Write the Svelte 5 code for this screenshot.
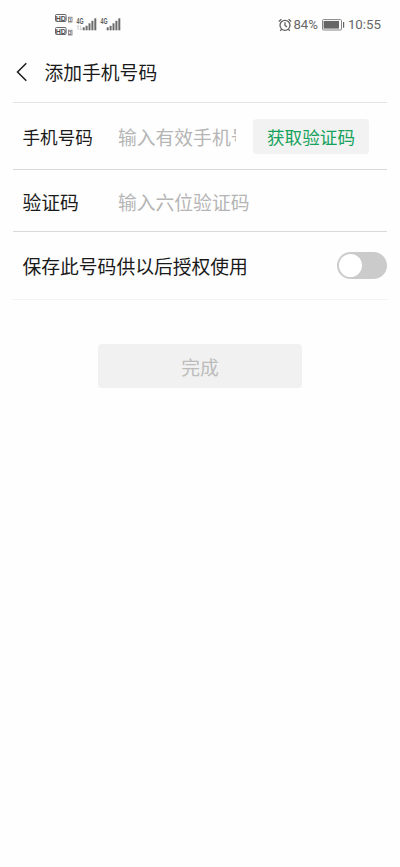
<script lang="ts">
	let phone = $state('');
	let code = $state('');
	let saved = $state(false);

	const sims = [1, 2];
	const bars = [3, 4.5, 7, 9.5, 12];
</script>

<svelte:head>
	<title>添加手机号码</title>
</svelte:head>

<div class="screen">
	<div class="status-bar">
		<div class="status-left">
			<div class="hd-group">
				{#each sims as sim}
					<svg width="18" height="9" viewBox="0 0 18 9">
						<rect x=".5" y=".5" width="10.6" height="7" rx="1" fill="#fefefe" stroke="#666" />
						<text x="5.8" y="6.6" class="hd-text" text-anchor="middle">HD</text>
						<rect x="13.4" y="3.2" width="3.6" height="4.8" fill="none" stroke="#777" stroke-width=".8" />
						<text x="15.2" y="7.5" class="sim-text" text-anchor="middle">{sim}</text>
					</svg>
				{/each}
			</div>
			{#each sims as sim}
				<svg class="signal" width="21" height="15" viewBox="0 0 21 15">
					<text x=".6" y="7.6" class="net-text" textLength="7" lengthAdjust="spacingAndGlyphs">4G</text>
					{#if sim === 1}
						<path d="M2 14V9.5M.8 10.8L2 9.5l1.2 1.3M4.7 9.5V14M3.5 12.7L4.7 14l1.2-1.3" fill="none" stroke="#c4c4c4" stroke-width=".8" />
					{/if}
					{#each bars as bar, i}
						<rect x={6.7 + i * 2.9} y={14.3 - bar} width="2" height={bar} fill="#6b6b6b" />
					{/each}
				</svg>
			{/each}
		</div>
		<div class="status-right">
			<svg width="14" height="14" viewBox="0 0 14 14" fill="none" stroke="#616161" stroke-width="1.3">
				<circle cx="7" cy="7.3" r="5" />
				<path d="M7 4.3v3.2l2 1.4M.8 3.4l2.6-2.2M13.2 3.4l-2.6-2.2M3.6 11.2l-1.3 1.6M10.4 11.2l1.3 1.6" />
			</svg>
			<span class="percent">84%</span>
			<svg class="battery" width="23" height="12" viewBox="0 0 23 12">
				<rect x=".5" y=".6" width="19" height="10.4" rx="1" fill="none" stroke="#858585" />
				<rect x="1.6" y="2" width="15.4" height="7.6" fill="#666" />
				<rect x="21" y="3" width="1.2" height="5.8" fill="#666" />
			</svg>
			<span class="time">10:55</span>
		</div>
	</div>

	<header class="header">
		<button class="back" aria-label="返回">
			<svg width="12" height="20" viewBox="0 0 12 20">
				<path d="M10.3 1.2L1.5 10l8.8 8.8" fill="none" stroke="#1c1c1c" stroke-width="1.5" />
			</svg>
		</button>
		<h1>添加手机号码</h1>
	</header>

	<div class="form">
		<div class="row row-phone">
			<label for="phone" class="small">手机号码</label>
			<input id="phone" type="tel" placeholder="输入有效手机号" bind:value={phone} />
			<button class="get-code">获取验证码</button>
		</div>
		<div class="row row-code">
			<label for="code">验证码</label>
			<input id="code" type="text" placeholder="输入六位验证码" bind:value={code} />
		</div>
		<div class="row row-save">
			<span class="save-text">保存此号码供以后授权使用</span>
			<button class="switch" class:on={saved} role="switch" aria-checked={saved} aria-label="保存此号码" onclick={() => (saved = !saved)}>
				<span class="knob"></span>
			</button>
		</div>
	</div>

	<button class="submit" disabled={!phone || !code}>完成</button>
</div>

<style>
	:global(body) {
		background: #fefefe;
	}

	.screen {
		min-height: 867px;
		background: #fefefe;
		color: #1a1a1a;
		font-family: "Noto Sans CJK SC", sans-serif;
		font-size: 18.8px;
		box-sizing: border-box;
	}

	button {
		padding: 0;
		border: none;
		font-family: inherit;
		cursor: pointer;
	}

	svg {
		display: block;
		flex: none;
	}

	.status-bar {
		display: flex;
		justify-content: space-between;
		height: 49px;
		padding: 0 19px 0 55px;
	}

	.status-left {
		display: flex;
		align-items: flex-start;
		gap: 3px;
	}

	.hd-group {
		display: flex;
		flex-direction: column;
		gap: 4px;
		padding-top: 14px;
	}

	.signal {
		margin-top: 16px;
	}

	.hd-text,
	.sim-text,
	.net-text {
		font-family: "Liberation Sans", sans-serif;
		font-weight: bold;
	}

	.hd-text {
		font-size: 7px;
		fill: #4d4d4d;
	}

	.sim-text {
		font-size: 5px;
		fill: #666;
	}

	.net-text {
		font-size: 8.5px;
		fill: #5c5c5c;
	}

	.status-right {
		display: flex;
		align-items: center;
		color: #666;
		font-family: Roboto, sans-serif;
		font-size: 13.3px;
	}

	.percent {
		margin-left: 1px;
		font-size: 13.2px;
	}

	.battery {
		margin: 0 3px 0 4px;
	}

	.header {
		display: flex;
		align-items: center;
		height: 46px;
		padding: 0 0 7px 16px;
	}

	.back {
		display: flex;
		background: none;
	}

	h1 {
		margin: 0 0 0 16.5px;
		font-size: 18.8px;
		font-weight: 400;
		line-height: 28px;
	}

	.form {
		margin: 0 13px;
		border-top: 1px solid #e4e4e4;
	}

	.row {
		display: flex;
		align-items: center;
		box-sizing: border-box;
		padding-left: 9.5px;
		border-bottom: 1px solid #d9d9d9;
	}

	.row-phone {
		height: 67px;
		padding-top: 1px;
	}

	.row-code {
		height: 62px;
		padding-top: 2px;
	}

	.row-save {
		justify-content: space-between;
		height: 68px;
		border-bottom-color: #f3f3f3;
	}

	label {
		flex: none;
		width: 95.5px;
	}

	label.small {
		font-size: 17.6px;
	}

	input {
		width: 118px;
		height: 30px;
		padding: 0;
		border: none;
		outline: none;
		background: none;
		color: inherit;
		font-family: inherit;
		font-size: 18.8px;
	}

	#code {
		flex: 1;
	}

	input::placeholder {
		color: #b5b5b5;
		opacity: 1;
	}

	.get-code {
		width: 116px;
		height: 35px;
		margin-left: 17px;
		border-radius: 4px;
		background: #f2f2f2;
		color: #16a25c;
		font-size: 17.6px;
	}

	.switch {
		width: 50px;
		height: 27px;
		padding: 2px;
		border-radius: 14px;
		background: #cbcbcb;
	}

	.knob {
		display: block;
		width: 23px;
		height: 23px;
		border-radius: 50%;
		background: #fff;
		transition: transform 0.15s ease;
	}

	.switch.on {
		background: #21a866;
	}

	.switch.on .knob {
		transform: translateX(23px);
	}

	.submit {
		display: block;
		width: 204px;
		height: 44px;
		margin: 44px auto 0;
		border-radius: 4px;
		background: #f1f1f1;
		color: #21a866;
		font-size: 18.8px;
	}

	.submit:disabled {
		color: #bcbcbc;
		cursor: default;
	}
</style>
